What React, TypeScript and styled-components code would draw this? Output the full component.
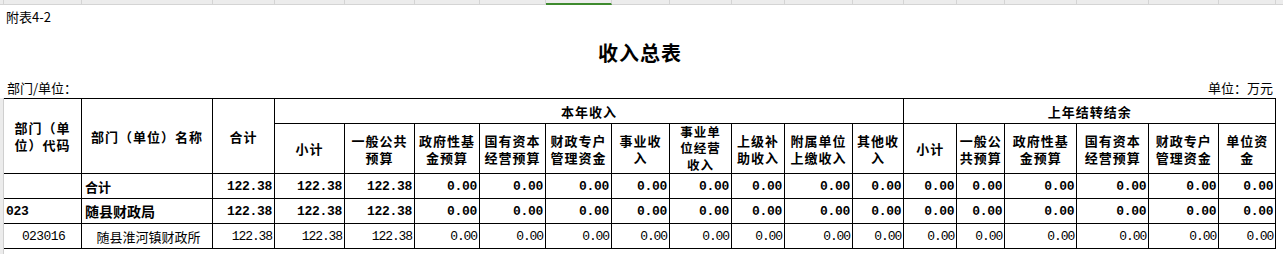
import React from "react";
import styled, { createGlobalStyle } from "styled-components";

const GlobalStyle = createGlobalStyle`
  html, body { margin: 0; padding: 0; background: #fff; }
  body {
    font-family: "Noto Sans CJK SC", "Noto Sans", sans-serif;
    color: #000;
  }
`;

const COLS = [78, 131, 62, 70, 70, 65, 66, 66, 58, 62, 53, 68, 51, 53, 48, 72, 72, 70, 57];
const ACTIVE_COL = 7;
const TABLE_W = COLS.reduce((a, b) => a + b, 0);

const Sheet = styled.div`
  width: 1283px;
  height: 254px;
  overflow: hidden;
  background: #fff;
  display: flex;
  flex-direction: column;
`;

const ColStrip = styled.div`
  display: flex;
  height: 5px;
  flex: none;
  background: #ececec;
`;

const StripCell = styled.div<{ $w?: number; $active?: boolean; $edge?: boolean }>`
  box-sizing: border-box;
  height: 100%;
  flex: ${(p) => (p.$w ? "none" : "1")};
  width: ${(p) => (p.$w ? `${p.$w}px` : "auto")};
  border-right: ${(p) => (p.$edge ? "none" : "1px solid #d4d4d4")};
  border-bottom: ${(p) => (p.$active ? "2px solid #3e8a2e" : "1px solid #d4d4d4")};
`;

const Top = styled.div`
  margin-left: 4px;
  width: ${TABLE_W}px;
  display: flex;
  flex-direction: column;
  flex: none;
`;

const Caption = styled.div`
  height: 24px;
  line-height: 24px;
  padding-left: 2px;
  font-size: 13px;
`;

const Title = styled.h1`
  margin: 0;
  height: 48px;
  line-height: 48px;
  text-align: center;
  font-size: 20px;
  font-weight: 700;
  letter-spacing: 1px;
`;

const MetaRow = styled.div`
  height: 21px;
  line-height: 21px;
  display: flex;
  justify-content: space-between;
  padding: 0 3px 0 3px;
  font-size: 13px;
`;

const TableArea = styled.div`
  display: flex;
  flex: 1;
`;

const Gutter = styled.div`
  width: 3px;
  flex: none;
  background: #ececec;
  border-right: 1px solid #cfcfcf;
`;

const Grid = styled.table`
  border-collapse: separate;
  border-spacing: 0;
  table-layout: fixed;
  width: ${TABLE_W}px;
  border-top: 1px solid #000;
  align-self: flex-start;
`;

const HeadRow = styled.tr<{ $h: number }>`
  height: ${(p) => p.$h}px;
`;

const HeadCell = styled.th`
  box-sizing: border-box;
  padding: 0;
  border-right: 1px solid #000;
  border-bottom: 1px solid #000;
  font-size: 13px;
  font-weight: 700;
  letter-spacing: 1px;
  line-height: 17px;
  text-align: center;
  vertical-align: middle;
  white-space: nowrap;
`;

const HeadStack = styled.div<{ $tight?: boolean }>`
  display: flex;
  flex-direction: column;
  align-items: center;
  justify-content: center;
  height: ${(p) => (p.$tight ? "49px" : "auto")};
  font-size: ${(p) => (p.$tight ? "12.5px" : "13px")};
`;

const HeadLine = styled.span<{ $tight?: boolean }>`
  display: block;
  line-height: ${(p) => (p.$tight ? "16.5px" : "17px")};
  height: ${(p) => (p.$tight ? "16.5px" : "17px")};
  flex: none;
`;

const BodyRow = styled.tr`
  height: 25px;
`;

const TextCell = styled.td<{ $bold?: boolean; $center?: boolean; $size?: number }>`
  box-sizing: border-box;
  padding: 0 0 0 3px;
  border-right: 1px solid #000;
  border-bottom: 1px solid #000;
  font-size: ${(p) => p.$size ?? 13}px;
  font-weight: ${(p) => (p.$bold ? 700 : 400)};
  text-align: ${(p) => (p.$center ? "center" : "left")};
  vertical-align: middle;
  white-space: nowrap;
  overflow: hidden;
`;

const CodeCell = styled.td<{ $bold?: boolean; $center?: boolean }>`
  box-sizing: border-box;
  padding: 0 0 0 2px;
  border-right: 1px solid #000;
  border-bottom: 1px solid #000;
  font-family: "Liberation Mono", monospace;
  font-size: 13px;
  font-weight: ${(p) => (p.$bold ? 700 : 400)};
  letter-spacing: ${(p) => (p.$bold ? "-0.3px" : "-0.6px")};
  text-align: ${(p) => (p.$center ? "center" : "left")};
  vertical-align: middle;
  white-space: nowrap;
`;

const NumCell = styled.td<{ $bold?: boolean }>`
  box-sizing: border-box;
  padding: 0 2px 0 0;
  border-right: 1px solid #000;
  border-bottom: 1px solid #000;
  font-family: "Liberation Mono", monospace;
  font-size: 13px;
  font-weight: ${(p) => (p.$bold ? 700 : 400)};
  letter-spacing: ${(p) => (p.$bold ? "-0.3px" : "-1.1px")};
  text-align: right;
  vertical-align: middle;
  white-space: nowrap;
`;

type Level = "total" | "dept" | "unit";

interface Row {
  code: string;
  name: string;
  level: Level;
  values: string[];
}

const vals = ["122.38", "122.38", "122.38", ...Array(14).fill("0.00")];

const ROWS: Row[] = [
  { code: "", name: "合计", level: "total", values: vals },
  { code: "023", name: "随县财政局", level: "dept", values: vals },
  { code: "023016", name: "随县淮河镇财政所", level: "unit", values: vals },
];

const CURRENT_HEADS: string[][] = [
  ["小计"],
  ["一般公共", "预算"],
  ["政府性基", "金预算"],
  ["国有资本", "经营预算"],
  ["财政专户", "管理资金"],
  ["事业收", "入"],
  ["事业单", "位经营", "收入"],
  ["上级补", "助收入"],
  ["附属单位", "上缴收入"],
  ["其他收", "入"],
];

const PRIOR_HEADS: string[][] = [
  ["小计"],
  ["一般公", "共预算"],
  ["政府性基", "金预算"],
  ["国有资本", "经营预算"],
  ["财政专户", "管理资金"],
  ["单位资", "金"],
];

const Lines: React.FC<{ parts: string[] }> = ({ parts }) => {
  const tight = parts.length > 2;
  return (
    <HeadStack $tight={tight}>
      {parts.map((p, i) => (
        <HeadLine key={i} $tight={tight}>
          {p}
        </HeadLine>
      ))}
    </HeadStack>
  );
};

export default function App() {
  return (
    <>
      <GlobalStyle />
      <Sheet>
        <ColStrip>
          <StripCell $w={4} />
          {COLS.map((w, i) => (
            <StripCell key={i} $w={w} $active={i === ACTIVE_COL} />
          ))}
          <StripCell $edge />
        </ColStrip>
        <Top>
          <Caption>附表4-2</Caption>
          <Title>收入总表</Title>
          <MetaRow>
            <span>部门/单位：</span>
            <span>单位：万元</span>
          </MetaRow>
        </Top>
        <TableArea>
          <Gutter />
          <Grid>
            <colgroup>
              {COLS.map((w, i) => (
                <col key={i} style={{ width: w }} />
              ))}
            </colgroup>
            <thead>
              <HeadRow $h={25}>
                <HeadCell rowSpan={2}>
                  <Lines parts={["部门（单", "位）代码"]} />
                </HeadCell>
                <HeadCell rowSpan={2}>部门（单位）名称</HeadCell>
                <HeadCell rowSpan={2}>合计</HeadCell>
                <HeadCell colSpan={CURRENT_HEADS.length}>本年收入</HeadCell>
                <HeadCell colSpan={PRIOR_HEADS.length}>上年结转结余</HeadCell>
              </HeadRow>
              <HeadRow $h={50}>
                {CURRENT_HEADS.map((h, i) => (
                  <HeadCell key={`c${i}`}>
                    <Lines parts={h} />
                  </HeadCell>
                ))}
                {PRIOR_HEADS.map((h, i) => (
                  <HeadCell key={`p${i}`}>
                    <Lines parts={h} />
                  </HeadCell>
                ))}
              </HeadRow>
            </thead>
            <tbody>
              {ROWS.map((r, ri) => {
                const bold = r.level !== "unit";
                const center = r.level === "unit";
                return (
                  <BodyRow key={ri}>
                    <CodeCell $bold={bold} $center={center}>
                      {r.code}
                    </CodeCell>
                    <TextCell $bold={bold} $center={center} $size={r.level === "dept" ? 14 : 13}>
                      {r.name}
                    </TextCell>
                    {r.values.map((v, vi) => (
                      <NumCell key={vi} $bold={bold}>
                        {v}
                      </NumCell>
                    ))}
                  </BodyRow>
                );
              })}
            </tbody>
          </Grid>
        </TableArea>
      </Sheet>
    </>
  );
}
